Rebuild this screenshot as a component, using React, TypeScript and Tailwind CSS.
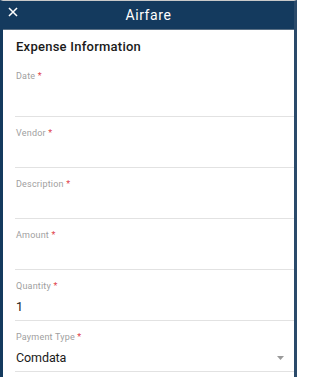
import React from "react";

const fields = [
  { label: "Date", value: "" },
  { label: "Vendor", value: "" },
  { label: "Description", value: "" },
  { label: "Amount", value: "" },
  { label: "Quantity", value: "1" },
  { label: "Payment Type", value: "Comdata", select: true },
];

export default function App() {
  return (
    <div
      className="w-[297px] h-[377px] overflow-hidden bg-white border-t border-t-[#c9c9c9] border-l-[3px] border-r-[3px] border-l-[#143a5e] border-r-[#2a4a6a] flex flex-col"
      style={{ fontFamily: "Roboto, 'Noto Sans', sans-serif" }}
    >
      <div className="h-[29px] shrink-0 bg-[#143a5e] border-b border-b-[#5a6f84] relative flex items-center justify-center">
        <svg
          className="absolute left-[4px] top-[5px]"
          width="12"
          height="12"
          viewBox="0 0 12 12"
          fill="none"
          stroke="white"
          strokeWidth="1.5"
          strokeLinecap="square"
        >
          <path d="M2.5 2.5 L9.5 9.5 M9.5 2.5 L2.5 9.5" />
        </svg>
        <span className="text-white text-[14px] tracking-[0.6px] leading-none">Airfare</span>
      </div>
      <div className="h-[32px] shrink-0 pl-[13px] pt-[9px]">
        <div className="text-[13px] font-medium tracking-[0.25px] text-[#1a1a1a] leading-[16px]">
          Expense Information
        </div>
      </div>
      <div className="ml-[12px] flex flex-col">
        {fields.map((f, i) => (
          <div
            key={f.label}
            className={`${i === 0 ? "h-[55px] pt-[8px]" : "h-[51px] pt-[10px]"} border-b border-b-[#e2e2e2] pl-[1px] flex flex-col`}
          >
            <div className="text-[9px] leading-[12px] text-[#a0a0a0] tracking-[0.2px]">
              {f.label} <span className="text-[#e0434b]">*</span>
            </div>
            <div className="mt-[5px] h-[20px] flex items-center justify-between pr-[10px]">
              <span className="text-[12.5px] tracking-[-0.1px] text-[#1a1a1a] leading-[20px]">{f.value}</span>
              {f.select && (
                <svg width="7" height="4" viewBox="0 0 7 4">
                  <path d="M0 0 L7 0 L3.5 4 Z" fill="#9a9a9a" />
                </svg>
              )}
            </div>
          </div>
        ))}
      </div>
    </div>
  );
}
